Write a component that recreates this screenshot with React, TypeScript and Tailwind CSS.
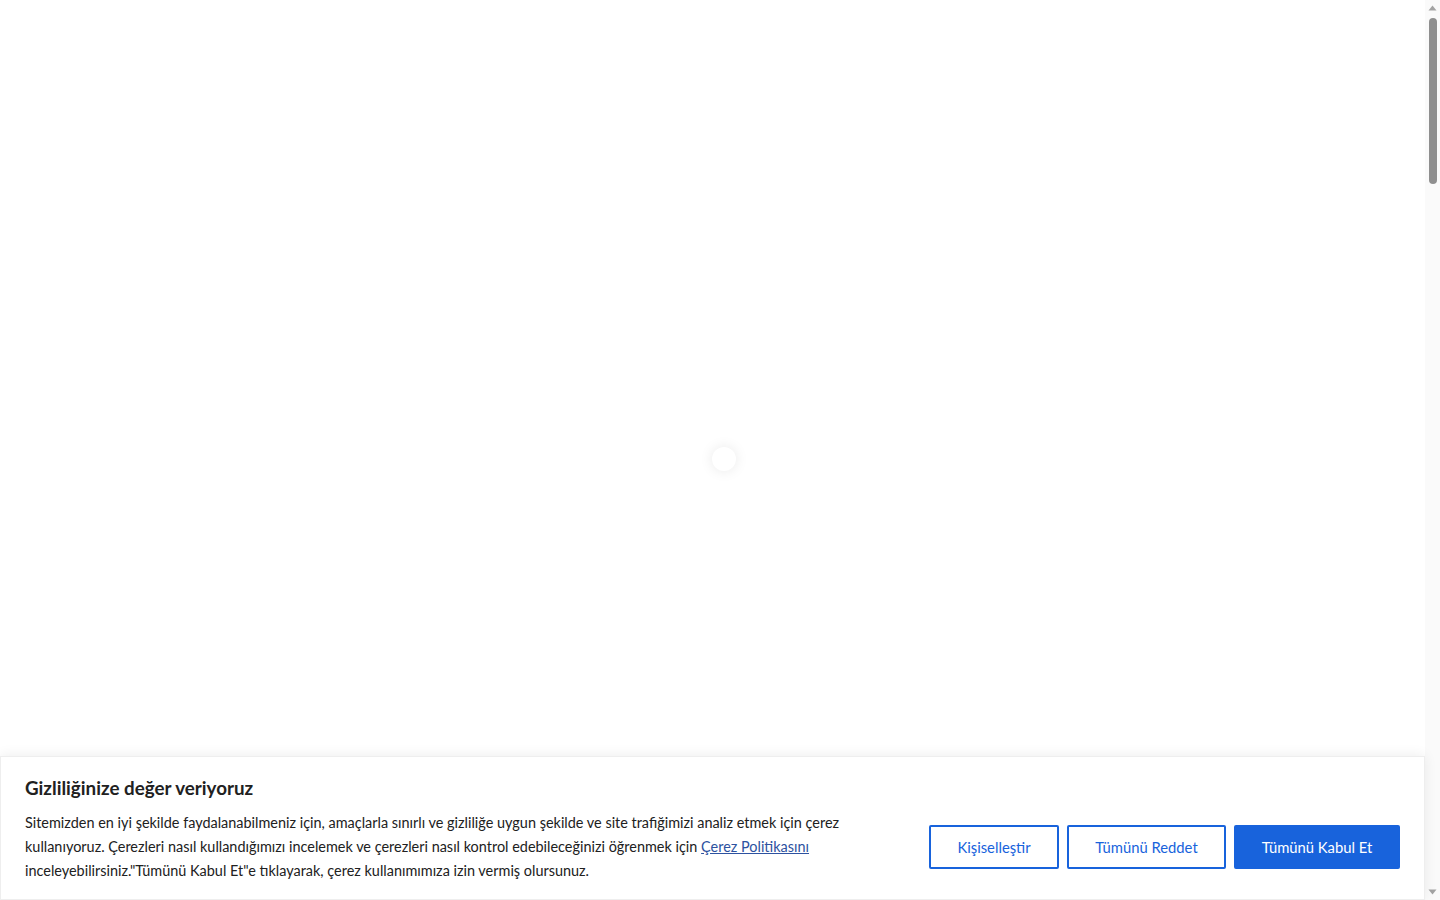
import React from 'react';

function Scrollbar() {
  return (
    <div className="flex h-full w-[15px] shrink-0 flex-col items-center bg-[#fafafa]">
      <svg width="15" height="15" viewBox="0 0 15 15" className="shrink-0">
        <path d="M3.5 10.5 L7.5 5.5 L11.5 10.5 Z" fill="#a3a3a3" />
      </svg>
      <div className="mt-[3px] h-[166px] w-[8px] rounded-full bg-[#8f8f8f]" />
      <div className="flex-1" />
      <svg width="15" height="15" viewBox="0 0 15 15" className="shrink-0">
        <path d="M3.5 4.5 L11.5 4.5 L7.5 9.5 Z" fill="#a3a3a3" />
      </svg>
    </div>
  );
}

export default function App() {
  return (
    <div className="flex h-screen overflow-hidden bg-white" style={{ fontFamily: 'Lato, "Noto Sans", sans-serif' }}>
      <div className="relative flex min-w-0 flex-1 flex-col">
        {/* page loader */}
        <div className="absolute left-[712px] top-[447px] h-6 w-6 rounded-full bg-white shadow-[0_0_14px_rgba(0,0,0,0.09)]" />

        <div className="flex-1" />

        {/* cookie consent banner */}
        <div className="border border-[#eeeeee] bg-white px-6 pb-[16px] pt-[19px] shadow-[0_-1px_12px_rgba(0,0,0,0.07)]">
          <h2 className="text-[18.8px] font-bold leading-[24px] text-[#212121]">Gizliliğinize değer veriyoruz</h2>
          <div className="mt-[11px] flex items-center">
            <p className="w-[830px] text-[14.45px] leading-[24px] text-[#212121]">
              Sitemizden en iyi şekilde faydalanabilmeniz için, amaçlarla sınırlı ve gizliliğe uygun şekilde ve site trafiğimizi analiz etmek için çerez kullanıyoruz. Çerezleri nasıl kullandığımızı incelemek ve çerezleri nasıl kontrol edebileceğinizi öğrenmek için{' '}
              <a href="#" className="text-[#2d52a0] underline">Çerez Politikasını</a>{' '}
              inceleyebilirsiniz."Tümünü Kabul Et"e tıklayarak, çerez kullanımımıza izin vermiş olursunuz.
            </p>
            <div className="ml-auto flex gap-2">
              <button className="h-[44px] w-[130px] rounded-[2px] border-2 border-[#1863dc] text-[14.8px] text-[#1863dc]">Kişiselleştir</button>
              <button className="h-[44px] w-[159px] rounded-[2px] border-2 border-[#1863dc] text-[14.8px] text-[#1863dc]">Tümünü Reddet</button>
              <button className="h-[44px] w-[166px] rounded-[2px] border-2 border-[#1863dc] bg-[#1863dc] text-[14.8px] text-white">Tümünü Kabul Et</button>
            </div>
          </div>
        </div>
      </div>
      <Scrollbar />
    </div>
  );
}
